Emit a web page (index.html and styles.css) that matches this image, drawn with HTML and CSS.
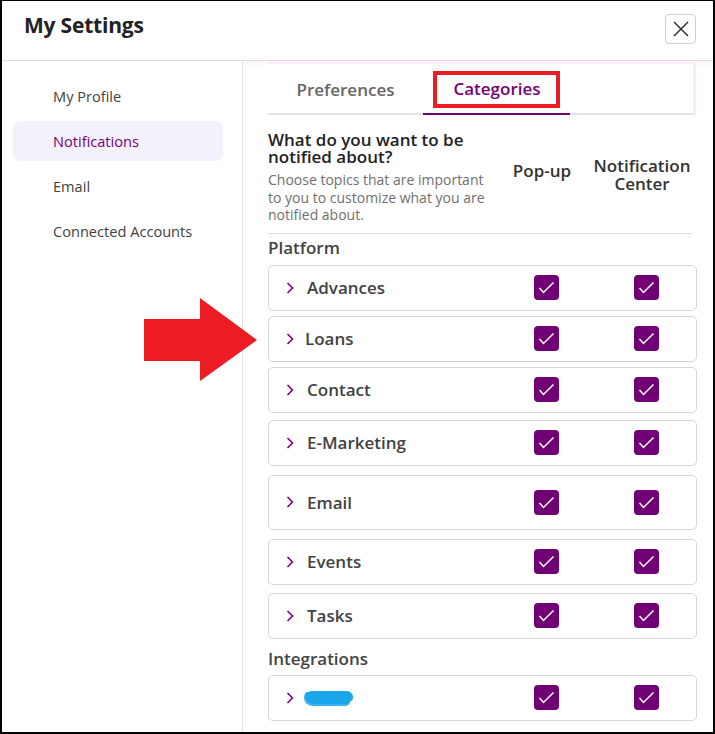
FILE: index.html
```html
<!DOCTYPE html>
<html lang="en">
<head>
  <meta charset="UTF-8">
  <title>My Settings</title>
  <link rel="stylesheet" href="styles.css">
</head>
<body>
  <div class="frame">
    <div class="head">
      <h1>My Settings</h1>
      <button class="close" aria-label="Close">
        <svg width="16" height="16" viewBox="0 0 16 16"><path d="M1 1 L15 15 M15 1 L1 15" stroke="#333" stroke-width="1.5" fill="none"/></svg>
      </button>
    </div>
    <div class="body">
      <div class="side">
        <div class="side-item">My Profile</div>
        <div class="side-item active">Notifications</div>
        <div class="side-item">Email</div>
        <div class="side-item">Connected Accounts</div>
      </div>
      <div class="main">
        <div class="tabs">
          <div class="tab tab-pref">Preferences</div>
          <div class="tab tab-cat active"><span class="mark">Categories</span></div>
        </div>

        <div class="intro">
          <div class="intro-text">
            <div class="intro-title">What do you want to be notified about?</div>
            <div class="intro-desc">Choose topics that are important to you to customize what you are notified about.</div>
          </div>
          <div class="col-head popup">Pop-up</div>
          <div class="col-head">Notification Center</div>
        </div>

        <div class="group-title">Platform</div>
        <div class="rows">
          <div class="row"><span class="chev"></span><span class="label">Advances</span><span class="cell"><i class="cb"></i></span><span class="cell"><i class="cb"></i></span></div>
          <div class="row gap5"><span class="chev"></span><span class="label narrow">Loans</span><span class="cell"><i class="cb"></i></span><span class="cell"><i class="cb"></i></span></div>
          <div class="row gap5"><span class="chev"></span><span class="label">Contact</span><span class="cell"><i class="cb"></i></span><span class="cell"><i class="cb"></i></span></div>
          <div class="row gap7"><span class="chev"></span><span class="label">E-Marketing</span><span class="cell"><i class="cb"></i></span><span class="cell"><i class="cb"></i></span></div>
          <div class="row gap9 tall"><span class="chev"></span><span class="label">Email</span><span class="cell"><i class="cb"></i></span><span class="cell"><i class="cb"></i></span></div>
          <div class="row gap9"><span class="chev"></span><span class="label">Events</span><span class="cell"><i class="cb"></i></span><span class="cell"><i class="cb"></i></span></div>
          <div class="row gap8"><span class="chev"></span><span class="label">Tasks</span><span class="cell"><i class="cb"></i></span><span class="cell"><i class="cb"></i></span></div>
        </div>

        <div class="group-title integ">Integrations</div>
        <div class="rows">
          <div class="row"><span class="chev"></span><span class="label"><span class="blur"></span></span><span class="cell"><i class="cb"></i></span><span class="cell"><i class="cb"></i></span></div>
        </div>
      </div>
    </div>

    <svg class="arrow" width="116" height="84" viewBox="0 0 116 84">
      <polygon points="0,21 56,21 56,0 113,42 56,83 56,63 0,63" fill="#ed1c24"/>
    </svg>
  </div>

  <script>
    // every checkbox gets the same ticked svg
    document.querySelectorAll('.cb').forEach(cb => {
      cb.innerHTML = '<svg width="25" height="25" viewBox="0 0 25 25"><rect width="25" height="25" rx="4" fill="#720075"/><path d="M5.5 13 L9.5 17.5 L19.5 7.5" stroke="#fff" stroke-width="1.5" fill="none"/></svg>';
    });
    document.querySelectorAll('.chev').forEach(ch => {
      ch.innerHTML = '<svg width="8" height="12" viewBox="0 0 8 12"><path d="M1.5 1 L6.5 6 L1.5 11" stroke="#7a007d" stroke-width="1.6" fill="none"/></svg>';
    });
  </script>
</body>
</html>
```

FILE: styles.css
```css
* {
  box-sizing: border-box;
}
body {
  margin: 0;
  font-family: "Open Sans", "Noto Sans", Arial, sans-serif;
  color: #333;
  background: #fff;
}
.frame {
  position: relative;
  width: 715px;
  height: 734px;
  border: 2px solid #000;
  border-top-width: 1px;
  overflow: hidden;
  display: flex;
  flex-direction: column;
}
.head {
  height: 60px;
  flex: none;
  border-bottom: 1px solid #dcdcdc;
  display: flex;
  align-items: flex-start;
  justify-content: space-between;
  padding: 0 17px 0 22px;
}
.head h1 {
  margin: 10px 0 0;
  font-size: 21px;
  line-height: 28px;
  font-weight: 700;
  color: #222;
  letter-spacing: -0.2px;
}
.close {
  width: 31px;
  height: 30px;
  border: 1px solid #cfcfcf;
  border-radius: 4px;
  background: #fff;
  padding: 0;
  display: flex;
  align-items: center;
  justify-content: center;
  margin-top: 13px;
}
.body {
  flex: 1;
  display: flex;
  min-height: 0;
}
.side {
  width: 241px;
  flex: none;
  border-right: 1px solid #e2e2e2;
  padding: 15px 19px 0 11px;
}
.side-item {
  height: 40px;
  margin-bottom: 5px;
  display: flex;
  align-items: center;
  padding-left: 40px;
  font-size: 14.6px;
  color: #424242;
  border-radius: 7px;
}
.side-item.active {
  background: #f4f1fc;
  color: #740075;
}
.main {
  flex: 1;
  padding: 1px 14px 0 25px;
  overflow: hidden;
  background: linear-gradient(#fbf3fb, #fff 6px);
}
.tabs {
  display: flex;
  height: 53px;
  width: 428px;
  background: #fff;
  border-top: 2px solid #f8ecf9;
  border-right: 3px solid #f8ecf9;
  border-bottom: 2px solid #e2e2e8;
}
.tab {
  display: flex;
  align-items: center;
  justify-content: center;
  font-size: 17px;
  font-weight: 600;
  color: #666;
  margin-bottom: -2px;
  border-bottom: 2px solid transparent;
}
.tab-pref {
  width: 155px;
  padding-top: 2px;
}
.tab-cat {
  width: 147px;
  color: #740075;
  border-bottom-color: #740075;
}
.mark {
  border: 4px solid #ed1c24;
  padding: 3px 15px 4px 16px;
  line-height: 22px;
  margin-top: 1px;
}
.intro {
  display: flex;
  align-items: center;
  width: 424px;
  margin-top: 16px;
  padding-bottom: 9px;
  border-bottom: 1px solid #e0e0e0;
}
.intro-text {
  flex: 1;
  padding-right: 6px;
}
.intro-title {
  font-size: 17px;
  font-weight: 600;
  line-height: 17px;
  color: #222;
}
.intro-desc {
  font-size: 14px;
  line-height: 17.5px;
  color: #707070;
  margin-top: 6px;
}
.col-head {
  width: 100px;
  flex: none;
  text-align: center;
  font-size: 17px;
  font-weight: 600;
  line-height: 18px;
  color: #333;
  margin-top: -4px;
}
.col-head.popup {
  margin-top: -12px;
}
.group-title {
  font-size: 17px;
  font-weight: 600;
  line-height: 18px;
  color: #444;
  margin-top: 5px;
}
.group-title.integ {
  margin-top: 11px;
}
.rows {
  margin-top: 8px;
  width: 429px;
}
.group-title.integ + .rows {
  margin-top: 7px;
}
.row {
  height: 46px;
  border: 1px solid #d6d6d6;
  border-radius: 5px;
  display: flex;
  align-items: center;
}
.row.tall {
  height: 55px;
}
.gap5 { margin-top: 5px; }
.gap7 { margin-top: 7px; }
.gap8 { margin-top: 8px; }
.gap9 { margin-top: 9px; }
.chev {
  width: 8px;
  height: 12px;
  margin-left: 17px;
  display: flex;
}
.label {
  flex: 1;
  margin-left: 13px;
  font-size: 17px;
  font-weight: 600;
  color: #424242;
  display: flex;
  align-items: center;
}
.label.narrow {
  margin-left: 11px;
}
.blur {
  display: inline-block;
  width: 46px;
  height: 12px;
  margin-left: -2px;
  background: #1aa6ea;
  border-radius: 3px 8px 5px 9px;
  box-shadow: 3px -2px 0 -1px #1aa6ea, -1px 2px 0 #3ab4ee;
}
.cell {
  width: 100px;
  flex: none;
  display: flex;
  justify-content: center;
}
.cb {
  width: 25px;
  height: 25px;
  display: block;
}
.arrow {
  position: absolute;
  left: 142px;
  top: 297px;
}
```
